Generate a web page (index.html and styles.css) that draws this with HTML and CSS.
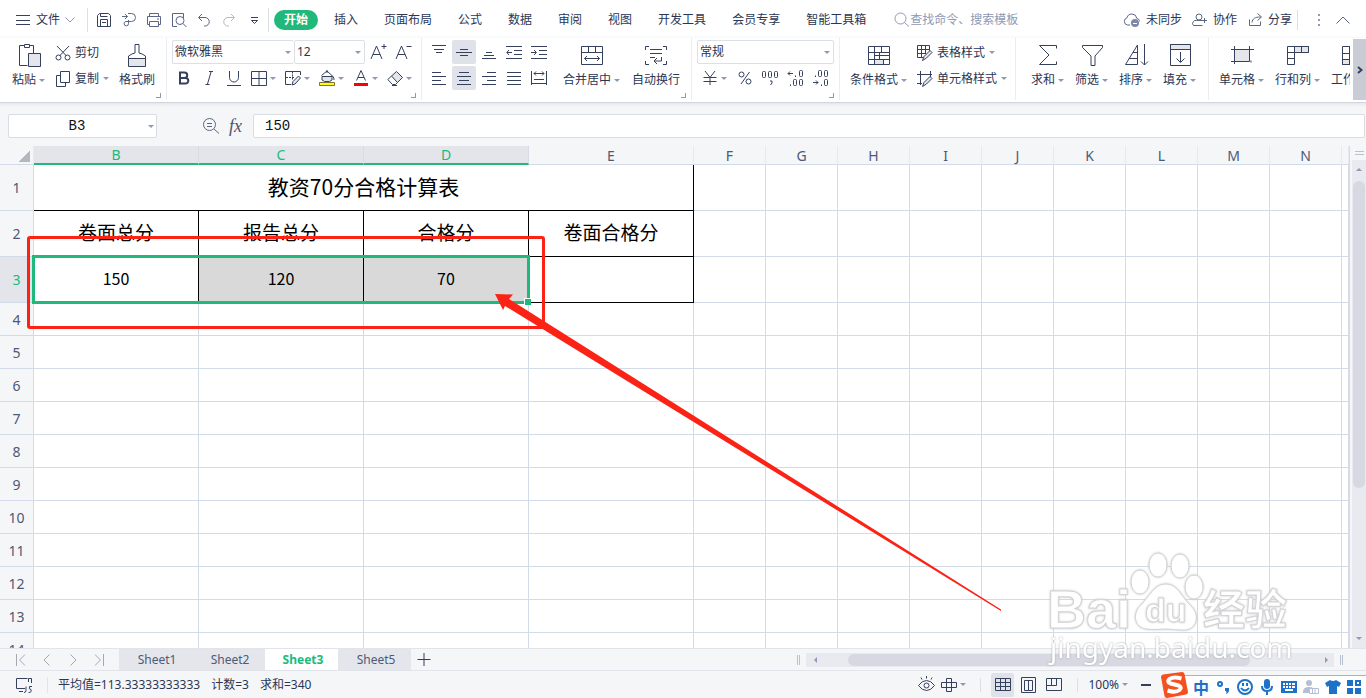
FILE: index.html
```html
<!DOCTYPE html>
<html lang="zh-CN">
<head>
<meta charset="utf-8">
<title>教资70分合格计算表</title>
<link rel="stylesheet" href="styles.css">
</head>
<body>
<header class="menubar">
  <button class="file-menu"><svg class="ic" width="16" height="16"><path d="M1 3.500h14M1 8.500h14M1 12.500h14"/></svg>文件<svg class="ic soft" width="10" height="8"><path d="M.5 1.500l4.500 4.500 4.500-4.500"/></svg></button>
  <div class="quick">
    <button aria-label="保存"><svg class="ic" width="16" height="16"><path d="M1.500 3.500l2-2h9l2 2v11h-13zM4.500 14v-6.500h7V14M4.500 1.500v3h7M6 10.500h4"/></svg></button>
    <button aria-label="输出"><svg class="ic mid" width="16" height="16"><path d="M1 4.500h5.500M4 2l2.500 2.500L4 7M7 1.500h3.500a4 4 0 0 1 0 8H5a2.200 2.200 0 1 0 2.500 2.200V8"/></svg></button>
    <button aria-label="打印"><svg class="ic mid" width="16" height="16"><path d="M3.500 4.500v-3h9v3M3.500 12.500h-2v-8h13v8h-2M3.500 9.500h9v5h-9zM11 7h2"/></svg></button>
    <button aria-label="预览"><svg class="ic mid" width="16" height="16"><path d="M6 14.500H1.500v-13h11V6"/><circle cx="9" cy="8.500" r="4"/><path d="M12 11.500l3.500 3.500"/></svg></button>
    <button aria-label="撤销"><svg class="ic mid" width="16" height="16"><path d="M6 2L2.500 5.500 6 9M3 5.500h6a4 4 0 0 1 0 8.500H8"/></svg></button>
    <button aria-label="恢复"><svg class="ic pale" width="16" height="16"><path d="M10 2l3.500 3.500L10 9M13 5.500H7A4 4 0 0 0 7 14h1"/></svg></button>
    <button aria-label="更多"><svg class="ic" width="16" height="16"><path d="M5 5.500h7M5.500 8.500l3 3 3-3z"/></svg></button>
  </div>
  <nav class="tabs">
    <button class="active">开始</button><button>插入</button><button>页面布局</button><button>公式</button><button>数据</button><button>审阅</button><button>视图</button><button>开发工具</button><button>会员专享</button><button>智能工具箱</button>
  </nav>
  <label class="search"><svg class="ic" width="16" height="16"><circle cx="6.500" cy="6.500" r="5.500"/><path d="M10.500 10.500l4.500 4"/></svg><input type="search" placeholder="查找命令、搜索模板" aria-label="查找命令"></label>
  <div class="account">
    <button><svg class="ic mid" width="18" height="16"><path d="M7 13H4.500a3.700 3.700 0 0 1-.5-7.200 5 5 0 0 1 9.800.5c1.700.4 2.700 1.700 2.700 3"/><circle class="solid" cx="12" cy="11" r="4"/><path stroke="#fff" d="M10 11.500h4"/></svg>未同步</button>
    <button><svg class="ic mid" width="16" height="16"><circle cx="7" cy="5" r="3"/><path d="M10 8.500H4.500A3 3 0 0 0 1.500 13.500h9M12.500 6v5M10 8.500h5"/></svg>协作</button>
    <button><svg class="ic mid" width="16" height="16"><path d="M2.500 7.500v6h11v-4M5 10.500c.5-4 3-5.500 8.500-5.500M10.500 1.500L14.500 5l-4 3.500"/></svg>分享</button>
  </div>
  <div class="window-tools">
    <button aria-label="更多选项"><svg class="ic dots" width="4" height="16"><path d="M1 2h2v2H1zM1 7h2v2H1zM1 12h2v2H1z"/></svg></button>
    <button aria-label="收起功能区"><svg class="ic mid" width="16" height="10"><path d="M1.500 8.500L8 2l6.500 6.500"/></svg></button>
  </div>
</header>

<section class="ribbon" aria-label="开始">
  <div class="group g-clip">
    <button class="big"><svg class="ic" width="28" height="28"><path d="M9.500 4.500h-5v20h8M18.500 12V4.500h-4M9.500 3.500h5v3h-5z"/><path class="fill" d="M13.500 12.500h12v13h-12z" /></svg><span class="lbl caret">粘贴</span></button>
    <div class="stack">
      <button class="item"><svg class="ic" width="16" height="16"><path d="M2 1l9.500 10M14 1L4.500 11"/><circle cx="3.500" cy="12.500" r="2.500"/><circle cx="12.500" cy="12.500" r="2.500"/></svg>剪切</button>
      <button class="item caret"><svg class="ic" width="16" height="16"><path d="M5.500.5h9v11h-9zM5 4.500H1.500v11h9V12"/></svg>复制</button>
    </div>
    <button class="big"><svg class="ic" width="28" height="28"><path d="M12 3.500h4v8.500q3 .5 6.500 3v3h-17v-3q3.500-2.500 6.500-3z"/><path class="fill" d="M5.500 17.500h17v8h-17z"/></svg><span class="lbl">格式刷</span></button>
    <i class="corner"></i>
  </div>
  <div class="group g-font">
    <div class="stack">
      <div class="row">
        <span class="combo font"><select aria-label="字体"><option>微软雅黑</option></select></span><span class="combo size"><select aria-label="字号"><option>12</option></select></span>
        <button class="grow" aria-label="增大字号"><svg class="ic" width="17" height="20"><path d="M1 17L6.500 4 12 17M3 12.500h7M11.500 4.500h5M14 2v5"/></svg></button>
        <button class="grow" aria-label="减小字号"><svg class="ic" width="17" height="20"><path d="M1 17L6.500 4 12 17M3 12.500h7M11.500 4.500h5"/></svg></button>
      </div>
      <div class="row">
        <button class="tool" aria-label="加粗"><svg class="ic heavy" width="16" height="16"><path d="M4 2.500h4.500a2.700 2.700 0 0 1 0 5.400H4zM4 8h5.500a2.800 2.800 0 0 1 0 5.600H4z"/></svg></button>
        <button class="tool" aria-label="倾斜"><svg class="ic" width="16" height="16"><path d="M8 1.500h4M4.500 14.500h4M10 2L6.500 14"/></svg></button>
        <button class="tool" aria-label="下划线"><svg class="ic" width="16" height="16"><path d="M3.500 1v6.500a4.500 4.500 0 0 0 9 0V1M1 15.500h14"/></svg></button>
        <button class="drop caret" aria-label="边框"><svg class="ic" width="16" height="16"><path d="M.5 1.500h15v14H.5zM8 1.500v14M.5 8.500h15"/></svg></button>
        <button class="drop caret" aria-label="绘图边框"><svg class="ic" width="16" height="16"><path d="M6 14.500H.5v-13h15V5"/><path stroke-dasharray="2 1" d="M7.500 1.500v8M1 7.500h8"/><path class="fill" d="M7 15l1-3.500L13.500 6l2 2L10 14z"/></svg></button>
        <button class="drop caret" aria-label="填充颜色"><svg class="ic" width="16" height="16"><path class="fill" d="M3 6.500h10v3.500l-2.500 1.500h-5L3 10z"/><path d="M2.500 5.500L8 1l6 5.500M8 0v3M13.500 6q2 2 1.500 4"/><path fill="#ff0" stroke="#77733a" d="M.5 12.500h15v3H.5z"/></svg></button>
        <button class="drop caret" aria-label="字体颜色"><svg class="ic" width="16" height="16"><path d="M3.500 10.500L8 .5l4.500 10M5 7.500h6"/><path fill="#f00" stroke="none" d="M1 13h14v3H1z"/></svg></button>
        <button class="drop caret" aria-label="清除"><svg class="ic" width="16" height="16"><path class="fill" d="M4.500 6L9.500 1.500l6 6-5 5z"/><path d="M4.500 6L.8 9.500 5.500 14.500h3l2-2M5 15.500h5"/></svg></button>
      </div>
    </div>
    <i class="corner"></i>
  </div>
  <div class="group g-align">
    <div class="stack">
      <div class="row">
        <button class="tool" aria-label="顶端对齐"><svg class="ic" width="16" height="16"><path d="M1 1.500h14M3 5.500h10M5 8.500h6"/></svg></button>
        <button class="tool on" aria-label="垂直居中"><svg class="ic" width="16" height="16"><path d="M4 5.500h8M0 8.500h16M4 11.500h8"/></svg></button>
        <button class="tool" aria-label="底端对齐"><svg class="ic" width="16" height="16"><path d="M5 8.500h6M3 11.500h10M1 14.500h14"/></svg></button>
        <button class="tool" aria-label="减少缩进"><svg class="ic" width="16" height="16"><path d="M0 2.500h16M8 6.500h8M8 10.500h8M0 14.500h16M1 8.500h5M3 6L.8 8.500 3 11"/></svg></button>
        <button class="tool" aria-label="增加缩进"><svg class="ic" width="16" height="16"><path d="M0 2.500h16M8 6.500h8M8 10.500h8M0 14.500h16M0 8.500h5M3 6l2.500 2.500L3 11"/></svg></button>
      </div>
      <div class="row">
        <button class="tool" aria-label="左对齐"><svg class="ic" width="16" height="16"><path d="M1 2.500h9M1 6.500h14M1 10.500h9M1 14.500h14"/></svg></button>
        <button class="tool on" aria-label="水平居中"><svg class="ic" width="16" height="16"><path d="M3 2.500h10M1 6.500h14M3 10.500h10M1 14.500h14"/></svg></button>
        <button class="tool" aria-label="右对齐"><svg class="ic" width="16" height="16"><path d="M6 2.500h9M1 6.500h14M6 10.500h9M1 14.500h14"/></svg></button>
        <button class="tool" aria-label="两端对齐"><svg class="ic" width="16" height="16"><path d="M1 2.500h14M1 6.500h14M1 10.500h14M1 14.500h14"/></svg></button>
        <button class="tool" aria-label="分散对齐"><svg class="ic" width="16" height="16"><path d="M.5 1v14M15.500 1v14M3 3.500h10M5 1.500l-2 2 2 2M11 1.500l2 2-2 2M3 9.500h10M1 13.500h14"/></svg></button>
      </div>
    </div>
    <button class="big"><svg class="ic" width="28" height="28"><path d="M3.500 5.500h21v18h-21zM3.500 11.500h21M10.500 5.500v6M17.500 5.500v6M6.500 17.500h15M9 15l-2.500 2.500L9 20M19 15l2.500 2.500L19 20"/></svg><span class="lbl caret">合并居中</span></button>
    <button class="big"><svg class="ic" width="28" height="28"><path d="M7 5.500H3.500V9M21 5.500h3.500V9M7 23.500H3.500V20M21 23.500h3.500V20M8 8.500h12M8 12.500h12M8 16.500h5M19.500 16v4H12M15 17l-3 3 3 3"/></svg><span class="lbl">自动换行</span></button>
    <i class="corner"></i>
  </div>
  <div class="group g-num">
    <div class="stack">
      <span class="combo format"><select aria-label="数字格式"><option>常规</option></select></span>
      <div class="row numbers">
        <button class="money caret" aria-label="货币"><svg class="ic" width="16" height="16"><path d="M3 1l5 6.500L13 1M1.500 7.500h13M1.500 11.500h13M8 7v8"/></svg></button>
        <button class="tool" aria-label="百分比"><svg class="ic" width="16" height="16"><circle cx="4.500" cy="4.500" r="2.500"/><circle cx="11.500" cy="11.500" r="2.500"/><path d="M12.500 2L4 14"/></svg></button>
        <button class="tool" aria-label="千位分隔"><svg class="ic" width="18" height="16"><rect x="1.500" y="1.500" width="3" height="6" rx="1"/><rect x="7.500" y="1.500" width="3" height="6" rx="1"/><rect x="13.500" y="1.500" width="3" height="6" rx="1"/><path class="thick" d="M9 11h2v2l-1.500 2"/></svg></button>
        <button class="tool" aria-label="增加小数位"><svg class="ic" width="17" height="18"><rect x="12.500" y="1.500" width="3" height="6" rx="1"/><rect x="6.500" y="10.500" width="3" height="6" rx="1"/><rect x="12.500" y="10.500" width="3" height="6" rx="1"/><path d="M1 4.500h5M3 2.500l-2 2 2 2M8.500 6.500v1.500M3.500 15.500V17"/></svg></button>
        <button class="tool" aria-label="减少小数位"><svg class="ic" width="17" height="18"><rect x="6.500" y="1.500" width="3" height="6" rx="1"/><rect x="12.500" y="1.500" width="3" height="6" rx="1"/><rect x="12.500" y="10.500" width="3" height="6" rx="1"/><path d="M3.500 6.500v1.500M1 13.500h5M4 11.500l2 2-2 2M9.500 15.500V17"/></svg></button>
      </div>
    </div>
    <i class="corner"></i>
  </div>
  <div class="group g-style">
    <button class="big"><svg class="ic" width="28" height="28"><path class="fill" d="M9.500 18.500h9v5h-9z"/><path d="M3.500 5.500h21v18h-21zM3.500 11.500h21M3.500 18.500h21M9.500 5.500v18M16.500 5.500v6M14.500 11.500v7M18.500 18.500v5M9.500 14.500h15"/></svg><span class="lbl caret">条件格式</span></button>
    <div class="stack">
      <button class="item caret"><svg class="ic" width="16" height="16"><path d="M6 12.500H.5V.5h12V6M.5 4.500h12M.5 8.500H9M4.500.5v12M8.500.5V8"/><path class="fill" d="M5.500 15.500l1.500-4L13 5.500l2 2L9.500 13z"/></svg>表格样式</button>
      <button class="item caret"><svg class="ic" width="16" height="16"><path d="M0 3.500h15M3.500 0v14M0 12.500h5M13.500 0v6"/><path class="fill" d="M5.500 15.500l1.500-4L13 5.500l2 2L9.500 13z"/></svg>单元格样式</button>
    </div>
  </div>
  <div class="group g-edit">
    <button class="big"><svg class="ic" width="28" height="28"><path d="M22.500 7.500v-3h-17L15 14 5.500 23.500h17v-3"/></svg><span class="lbl caret">求和</span></button>
    <button class="big"><svg class="ic" width="28" height="28"><path d="M4.500 4.500h20v2L17 15v9.500h-4V15L4.500 6.500z"/></svg><span class="lbl caret">筛选</span></button>
    <button class="big"><svg class="ic" width="28" height="28"><path d="M3.500 23.500L15.500 4v19.500zM7 17.500h8.500M11 11.500h4.500M22.500 3v21M19 20.500l3.500 3.500 3.500-3.500"/></svg><span class="lbl caret">排序</span></button>
    <button class="big"><svg class="ic" width="28" height="28"><path class="fill" d="M4.500 3.500h20v5h-20z"/><path d="M4.500 3.500h20v21h-20zM14.500 11v10M10.500 17.500l4 4 4-4"/></svg><span class="lbl caret">填充</span></button>
  </div>
  <div class="group g-cells">
    <button class="big"><svg class="ic" width="28" height="28"><path class="fill" d="M6.500 8.500h15v12h-15z"/><path d="M3 8.500h23M6.500 5v18M3 20.500h16M21.500 5v12M23 19.500v2"/></svg><span class="lbl caret">单元格</span></button>
    <button class="big"><svg class="ic" width="28" height="28"><path class="fill" d="M10.500 5.500h14v6h-14z"/><path d="M3.500 5.500h21v6h-14v12h-7zM10.500 5.500v6h-7M17.500 5.500v6M3.500 17.500h7"/></svg><span class="lbl caret">行和列</span></button>
    <button class="big sheet-btn"><svg class="ic" width="28" height="28"><path class="fill" d="M3.500 18.500h20v5h-20z"/><path d="M3.500 5.500h20v18h-20zM3.500 12.500h20M3.500 18.500h20M10.500 5.500v18"/></svg><span class="lbl">工作表</span></button>
  </div>
  <button class="ribbon-more" aria-label="更多功能"><svg class="ic thick" width="6" height="8"><path d="M1 1l3.500 3L1 7"/></svg></button>
</section>

<section class="formula">
  <span class="namebox caret"><input type="text" value="B3" aria-label="名称框"></span>
  <button aria-label="查找"><svg class="ic mid" width="18" height="18"><circle cx="7.500" cy="7.500" r="6"/><path d="M12 12l5 4.500M5 6.500h5M5 9.500h5"/></svg></button>
  <button class="fx">fx</button>
  <input class="content" type="text" value="150" aria-label="编辑栏">
</section>

<main class="workspace">
  <div class="sheet">
    <table class="grid">
      <colgroup><col class="c-head"><col class="c-wide"><col class="c-wide"><col class="c-wide"><col class="c-wide"><col class="c-std"><col class="c-std"><col class="c-std"><col class="c-std"><col class="c-std"><col class="c-std"><col class="c-std"><col class="c-std"><col class="c-std"><col></colgroup>
      <thead><tr><th class="all"></th><th class="sel">B</th><th class="sel">C</th><th class="sel">D</th><th>E</th><th>F</th><th>G</th><th>H</th><th>I</th><th>J</th><th>K</th><th>L</th><th>M</th><th>N</th><th></th></tr></thead>
      <tbody>
        <tr class="tall"><th>1</th><td class="title ink" colspan="4">教资70分合格计算表</td><td></td><td></td><td></td><td></td><td></td><td></td><td></td><td></td><td></td><td></td></tr>
        <tr class="tall names"><th>2</th><td class="ink">卷面总分</td><td class="ink">报告总分</td><td class="ink">合格分</td><td class="ink">卷面合格分</td><td></td><td></td><td></td><td></td><td></td><td></td><td></td><td></td><td></td><td></td></tr>
        <tr class="tall"><th class="sel">3</th><td class="ink">150</td><td class="ink picked">120</td><td class="ink picked">70</td><td class="ink"></td><td></td><td></td><td></td><td></td><td></td><td></td><td></td><td></td><td></td><td></td></tr>
      </tbody>
      <tbody id="blank"></tbody>
    </table>
    <div class="selection"></div>
    <div class="mark"></div>
    <svg class="arrow" width="1002" height="480"><path d="M495 148l18 .5-4 4.500L1001 463.500v1.500L505 160l-2 4z"/></svg>
  </div>
  <div class="vscroll"><i class="split"></i><div class="vtrack"><i class="up"></i><i class="vthumb"></i><i class="down"></i></div></div>
</main>

<section class="sheetbar">
  <div class="nav">
    <button aria-label="首张"><svg class="ic" width="12" height="12"><path d="M1.500 0v12M10 .5L4.500 6l5.500 5.500"/></svg></button>
    <button aria-label="上一张"><svg class="ic" width="12" height="12"><path d="M8.500.5L3 6l5.500 5.500"/></svg></button>
    <button aria-label="下一张"><svg class="ic" width="12" height="12"><path d="M3.500.5L9 6l-5.500 5.500"/></svg></button>
    <button aria-label="末张"><svg class="ic" width="12" height="12"><path d="M10.500 0v12M2 .5L7.500 6 2 11.500"/></svg></button>
  </div>
  <div class="sheets"><button>Sheet1</button><button>Sheet2</button><button class="current">Sheet3</button><button>Sheet5</button></div>
  <button class="add" aria-label="新建工作表"><svg class="ic" width="14" height="14"><path d="M.5 6.500h13M7 0v13"/></svg></button>
  <div class="hscroll"><i class="grip"></i><div class="htrack"><i class="left"></i><i class="hthumb"></i><i class="right"></i></div><i class="grip"></i></div>
</section>

<footer class="status">
  <span class="macro"><svg class="ic" width="17" height="16"><path d="M9 11.500H.5v-10h11M3 14.500h4M12.500 5V1.500h3V6M8 15.500q2 0 2-2v-4M16 9.500h-2.500q-1 3 1.500 3 1 3-2.500 3"/></svg></span>
  <span class="stats"><span>平均值=113.33333333333</span><span>计数=3</span><span>求和=340</span></span>
  <div class="views">
    <button aria-label="护眼"><svg class="ic" width="17" height="17"><path d="M.5 9.500q3.500-5 8-5t8 5q-3.500 5-8 5t-8-5zM8.500 0v2.500M3 1.500l1 2M14 1.500l-1 2"/><circle cx="8.500" cy="9.500" r="2.500"/></svg></button>
    <button class="caret cross" aria-label="阅读模式"><svg class="ic" width="16" height="16"><path d="M5.500 1.500h5v13h-5zM.5 5.500h15v5H.5z"/></svg></button>
    <i class="sep"></i>
    <button class="view on" aria-label="普通视图"><svg class="ic" width="16" height="14"><path d="M.5.5h15v12H.5zM.5 4.500h15M.5 8.500h15M5.500.5v12M10.500.5v12"/></svg></button>
    <button class="view" aria-label="页面布局"><svg class="ic" width="16" height="16"><path d="M.5.500h14v15H.5zM3.500 3.500h8v10h-8zM7.500 3.500v10"/></svg></button>
    <button class="view" aria-label="分页预览"><svg class="ic" width="17" height="14"><path d="M.5.5h15v12H.5zM.5 7.500h10v-7M5.500.5v7"/></svg></button>
    <i class="sep"></i>
    <button class="zoom caret">100%</button>
    <button class="minus" aria-label="缩小"><svg class="ic thick" width="10" height="4"><path d="M0 2h10"/></svg></button>
  </div>
</footer>

<svg class="watermark" width="250" height="120" viewBox="0 0 250 120" aria-hidden="true">
  <g class="wm">
    <text class="wm-latin" x="1" y="83">Bai</text>
    <ellipse cx="94" cy="37" rx="9" ry="12"/><ellipse cx="112" cy="20" rx="9" ry="12"/><ellipse cx="134" cy="21" rx="9" ry="12"/><ellipse cx="148" cy="42" rx="9" ry="12"/>
    <path d="M120 39c12 0 16 14 25 22 10 10 5 24-7 24-8 0-12-1-18-1s-13 1-19 0c-13-1-15-16-6-24 9-9 13-21 25-21z"/>
    <text class="wm-du" x="99" y="77">du</text>
    <text class="wm-cjk" x="157" y="80">经验</text>
  </g>
  <text class="wm-url" x="4" y="113">jingyan.baidu.com</text>
</svg>

<aside class="ime" aria-label="输入法">
  <svg class="sogou" width="30" height="27"><path class="tile" d="M1 5q0-2 2-2.500L22 0q2 0 2.500 2L28 20q0 2-2 2.500L7 26q-2 0-2.500-2z"/><path class="ess" d="M21.500 6.500q-8-2-12 .5-3 3 1 4.500l8 2q4 2 1 4.500-4 3-12 .5"/></svg>
  <div class="ime-bar">
    <span>中</span>
    <svg width="16" height="16"><circle class="line" cx="5" cy="5" r="2"/><path d="M10 9h4v3q-1 3-3 3 1-2 0-3h-1z"/></svg>
    <svg width="16" height="16"><circle class="line" cx="8" cy="8" r="7"/><path d="M5 4h2v3H5zM9 4h2v3H9z"/><path class="line" d="M4 9q4 5 8 0"/></svg>
    <svg width="16" height="16"><rect x="5" width="6" height="10" rx="3"/><path class="line" d="M3 7q0 5 5 5t5-5M8 12v4"/></svg>
    <svg width="16" height="16"><path fill-rule="evenodd" d="M0 2h16v12H0zM2 4v2h2V4zM5 4v2h2V4zM8 4v2h2V4zM11 4v2h3V4zM2 7v2h2V7zM5 7v2h2V7zM8 7v2h2V7zM11 7v2h3V7zM4 10v2h8v-2z"/></svg>
    <svg class="faded" width="16" height="16"><circle cx="6" cy="4" r="3"/><path d="M0 13q0-5 6-5 3 0 4 1v5H0z"/><path fill="#fff" stroke="#b3bfd6" d="M6.500 9.500h9v5h-9zM9.500 10v4M12 10v4"/></svg>
    <svg width="16" height="16"><path d="M5 1q3 2 6 0l5 3-2 4-2-1v8H4V7L2 8 0 4z"/></svg>
    <svg width="14" height="14"><path d="M0 0h6v6H0zM0 8h6v6H0zM8 8h6v6H8z"/><path class="line" d="M9 1h4v4H9z"/></svg>
  </div>
</aside>
<script src="grid.js"></script>
</body>
</html>
```
FILE: styles.css
```css
* { box-sizing: border-box; }
body {
  margin: 0; height: 100vh; overflow: hidden; position: relative;
  display: flex; flex-direction: column;
  background: #f5f6f8; color: #2b3653;
  font: 12px/20px "Noto Sans", "Noto Sans CJK SC", sans-serif;
}
button, input, select { font: inherit; color: inherit; border: 0; background: none; padding: 0; margin: 0; outline: 0; border-radius: 0; }
button { display: flex; align-items: center; white-space: nowrap; flex: none; }
svg { flex: none; display: block; }
.ic { fill: none; stroke: #35405d; stroke-width: 1; }
.ic .fill { fill: #e4e6eb; }
.ic.mid { stroke: #5a6684; }
.ic.soft { stroke: #8e99b5; }
.ic.pale { stroke: #b4b8c2; }
.ic.heavy, .ic.thick { stroke-width: 2; }
.ic .solid { fill: #7d89a8; stroke: none; }
.ic.dots { fill: #8e99b5; stroke: none; }
.caret::after {
  content: ""; flex: none; margin-left: 3px;
  border: 3px solid transparent; border-top-color: #8e99b5; border-bottom: 0;
}

/* menu bar */
.menubar { display: flex; align-items: center; height: 38px; padding-top: 1px; background: #fff; flex: none; }
.file-menu { padding: 0 10px 0 15px; gap: 5px; height: 24px; border-right: 1px solid #dcdfe6; width: 88px; }
.quick { display: flex; align-items: center; gap: 9px; padding: 0 5px 0 8px; height: 24px; border-right: 1px solid #dcdfe6; width: 181px; }
.tabs { display: flex; align-items: center; padding-left: 5px; }
.tabs button { padding: 0 13px; height: 20px; }
.tabs .active { padding: 0 10px; margin-right: 3px; border-radius: 10px; background: #21b97b; color: #fff; font-weight: 700; }
.search { display: flex; align-items: center; margin-left: 15px; flex: 1; color: #8e99b5; }
.search .ic { stroke: #8e99b5; }
.search input { flex: 1; min-width: 0; }
.search input::placeholder { color: #8e99b5; opacity: 1; }
.account { display: flex; gap: 10px; padding-right: 5px; }
.account button { gap: 5px; }
.window-tools { display: flex; align-items: center; gap: 14px; height: 20px; padding: 0 15px 0 19px; border-left: 1px solid #dcdfe6; }

/* ribbon */
.ribbon { display: flex; height: 65px; background: #fff; flex: none; border-bottom: 1px solid #d3d6dc; box-shadow: 0 1px 4px #dcdfe4; }
.group { display: flex; align-items: flex-start; position: relative; flex: none; height: 62px; padding-top: 2px; border-right: 1px solid #ebedf1; }
.big { flex-direction: column; padding-top: 1px; }
.lbl { display: flex; align-items: center; line-height: 22px; }
.stack { display: flex; flex-direction: column; gap: 2px; }
.row { display: flex; height: 24px; align-items: center; gap: 1px; }
.item { height: 24px; gap: 4px; padding-top: 1px; }
.item.caret::after { margin-left: 0; }
.corner { position: absolute; right: 5px; bottom: 2px; width: 5px; height: 5px; border: solid #8e99b5; border-width: 0 1px 1px 0; }
.tool { width: 24px; height: 24px; justify-content: center; }
.on { background: #dfe3e9; border-radius: 2px; }
.drop { width: 33px; height: 24px; padding-left: 4px; }
.combo { position: relative; display: flex; align-items: center; height: 24px; border: 1px solid #dcdfe6; border-radius: 2px; }
.combo select { appearance: none; flex: 1; height: 22px; padding: 0 2px; }
.combo::after { content: ""; position: absolute; right: 3px; border: 3px solid transparent; border-top-color: #8e99b5; border-bottom: 0; pointer-events: none; }
.combo.font { width: 122px; border-right: 0; }
.combo.size { width: 71px; margin-left: -1px; }
.grow { width: 24px; justify-content: center; }
.g-clip { width: 167px; padding-left: 12px; gap: 10px; }
.g-font { width: 255px; padding-left: 5px; }
.g-align { width: 270px; padding-left: 5px; gap: 12px; }
.g-num { width: 148px; padding-left: 5px; }
.combo.format { width: 137px; }
.numbers { padding-left: 5px; }
.money { width: 30px; }
.g-style { width: 176px; padding-left: 10px; gap: 10px; }
.g-edit { width: 193px; padding-left: 15px; gap: 11px; }
.g-cells { flex: 1; min-width: 0; padding-left: 10px; gap: 11px; overflow: hidden; border: 0; margin-right: 3px; }
.sheet-btn { align-items: flex-start; }
.sheet-btn .ic { margin-left: 8px; }
.ribbon-more { width: 13px; height: 61px; margin-top: 1px; background: #c9ccd5; justify-content: center; }

/* formula bar */
.formula { display: flex; align-items: center; height: 43px; padding: 3px 1px 0 8px; flex: none; }
.namebox { display: flex; align-items: center; width: 149px; height: 24px; padding-right: 2px; background: #fff; border: 1px solid #d9dce3; border-radius: 2px; margin-right: 45px; }
.namebox input { flex: 1; min-width: 0; text-align: center; }
.namebox input, .content { font: 14px/20px "Liberation Mono", monospace; color: #111; }
.fx { font: italic 18px/20px "Liberation Serif", serif; color: #4a5472; margin: 0 9px; width: 15px; }
.content { flex: 1; height: 24px; padding: 0 11px; background: #fff; border: 1px solid #d9dce3; border-radius: 2px; }

/* sheet */
.workspace { flex: 1; min-height: 0; display: flex; }
.sheet { flex: 1; min-width: 0; position: relative; overflow: hidden; background: #fff; border-right: 1px solid #d4dbe8; }
.grid { width: 100%; min-width: 1342px; table-layout: fixed; border-collapse: separate; border-spacing: 0; font-family: "Noto Sans CJK SC", sans-serif; }
.c-head { width: 34px; }
.c-wide { width: 165px; }
.c-std { width: 72px; }
.grid th, .grid td { padding: 0; height: 33px; border: solid #d4dbe8; border-width: 0 1px 1px 0; text-align: center; }
.grid th { background: #f5f6f8; color: #4d5976; font: 14px/17px "Noto Sans", sans-serif; }
.grid thead th { height: 19px; border-right-color: #e6eaf0; }
.grid thead .sel { border-bottom: 2px solid #21b97b; border-right-color: #d8dbe4; }
.grid .sel { background: #e3e5eb; color: #21b97b; }
.grid thead .all { background: linear-gradient(135deg, #f5f6f8 50%, #b4b7bd 50%) 19px 5px / 11px 11px no-repeat #f5f6f8; }
.grid .tall th, .grid .tall td { height: 46px; }
.grid td.ink { border-color: #000; color: #000; font-size: 16px; line-height: 24px; padding-bottom: 3px; }
.grid .names td.ink { font-size: 19px; }
.grid td.title { font-size: 21px; }
.grid td.picked { background: #d9d9d9; }
.selection { position: absolute; left: 32px; top: 109px; width: 498px; height: 49px; border: 3px solid #21b97b; }
.selection::after { content: ""; position: absolute; right: -4px; bottom: -4px; width: 6px; height: 6px; background: #21b97b; border: solid #fff; border-width: 1px 0 0 1px; }
.mark { position: absolute; left: 27px; top: 90px; width: 518px; height: 93px; border: 3px solid #fb2315; border-radius: 3px; }
.arrow { position: absolute; left: 0; top: 0; fill: #fb2315; }
.vscroll { width: 16px; display: flex; flex-direction: column; padding-left: 2px; }
.split { height: 4px; margin: 5px 2px 5px 3px; border: solid #b9c0ce; border-width: 1px 0; }
.vtrack { flex: 1; display: flex; flex-direction: column; align-items: center; background: #e9eaef; padding: 8px 1px; }
.up, .down, .left, .right { border: 3px solid transparent; }
.up { border-bottom-color: #8e99b5; border-top: 0; }
.down { border-top-color: #8e99b5; border-bottom: 0; margin-top: auto; }
.vthumb { width: 12px; height: 65%; margin-top: 10px; border-radius: 6px; background: #d6d9e1; }

/* sheet tabs */
.sheetbar { display: flex; height: 23px; flex: none; border-top: 1px solid #e1e4ea; border-bottom: 1px solid #e1e4ea; }
.nav { display: flex; width: 119px; padding-left: 15px; gap: 14px; }
.nav .ic { stroke: #a4a8b2; }
.sheets { display: flex; color: #4d5976; }
.sheets button { padding-left: 3px; width: 73px; justify-content: center; background: #e5e6ec; }
.sheets .current { background: #fff; color: #21b97b; font-weight: 700; }
.add { padding-left: 6px; }
.hscroll { display: flex; align-items: center; margin-left: auto; width: 569px; padding-right: 23px; gap: 6px; }
.grip { width: 3px; height: 10px; border: solid #b9c0ce; border-width: 0 1px; }
.htrack { flex: 1; height: 14px; display: flex; align-items: center; background: #e9eaef; padding: 0 6px; }
.left { border-right-color: #8e99b5; border-left: 0; margin-left: 2px; }
.right { border-left-color: #8e99b5; border-right: 0; margin-left: auto; }
.hthumb { width: 78%; height: 12px; margin-left: 31px; border-radius: 6px; background: #d6d9e1; }

/* status bar */
.status { display: flex; align-items: center; height: 27px; flex: none; }
.macro { display: flex; width: 48px; padding-left: 16px; border-right: 1px solid #e1e4ea; }
.stats { display: flex; gap: 11px; padding-left: 10px; }
.views { display: flex; align-items: center; margin-left: auto; padding-right: 215px; }
.cross { margin-left: 6px; }
.sep { width: 1px; height: 14px; background: #dcdfe6; margin: 0 10px 0 14px; }
.view { width: 23px; height: 24px; justify-content: center; margin-right: 3px; }
.view + .sep { margin-left: 8px; }
.minus { margin-left: 13px; }

/* watermark and input method bar */
.watermark { position: absolute; right: 70px; bottom: 33px; overflow: visible; }
.watermark text, .wm path, .wm ellipse { fill: #fff; stroke: #d4d4d7; stroke-width: 1; filter: drop-shadow(0 0 1px #c4c4c8); }
.watermark .wm-latin { font: 700 54px "Liberation Sans", sans-serif; }
.watermark .wm-du { font: 700 34px "Liberation Sans", sans-serif; }
.watermark .wm-cjk { font: 700 42px "Noto Sans CJK SC", sans-serif; }
.watermark .wm-url { font: 28px "Noto Sans", sans-serif; stroke: none; filter: drop-shadow(0 0 1px #a8a8ad); }
.ime { position: absolute; right: 0; bottom: 0; width: 206px; height: 26px; }
.sogou { position: absolute; left: 0; bottom: -1px; z-index: 1; }
.tile { fill: #f4511e; }
.ess { fill: none; stroke: #fff; stroke-width: 4; }
.ime-bar { display: flex; align-items: center; gap: 6px; margin-left: 20px; margin-top: 3px; height: 23px; padding-left: 13px; background: #fff; border-top: 1px solid #aeb1b8; color: #1c72c9; fill: #1c72c9; }
.ime-bar span { font: 700 16px/20px "Noto Sans CJK SC", sans-serif; }
.ime-bar .line { fill: none; stroke: #1c72c9; stroke-width: 2; }
.ime-bar .faded { fill: #b3bfd6; }
```
FILE: grid.js
```js
const body = document.getElementById("blank");
for (let n = 4; n <= 14; n++) {
  const row = body.insertRow();
  const head = document.createElement("th");
  head.textContent = n;
  row.append(head);
  for (let c = 0; c < 14; c++) row.insertCell();
}
```
